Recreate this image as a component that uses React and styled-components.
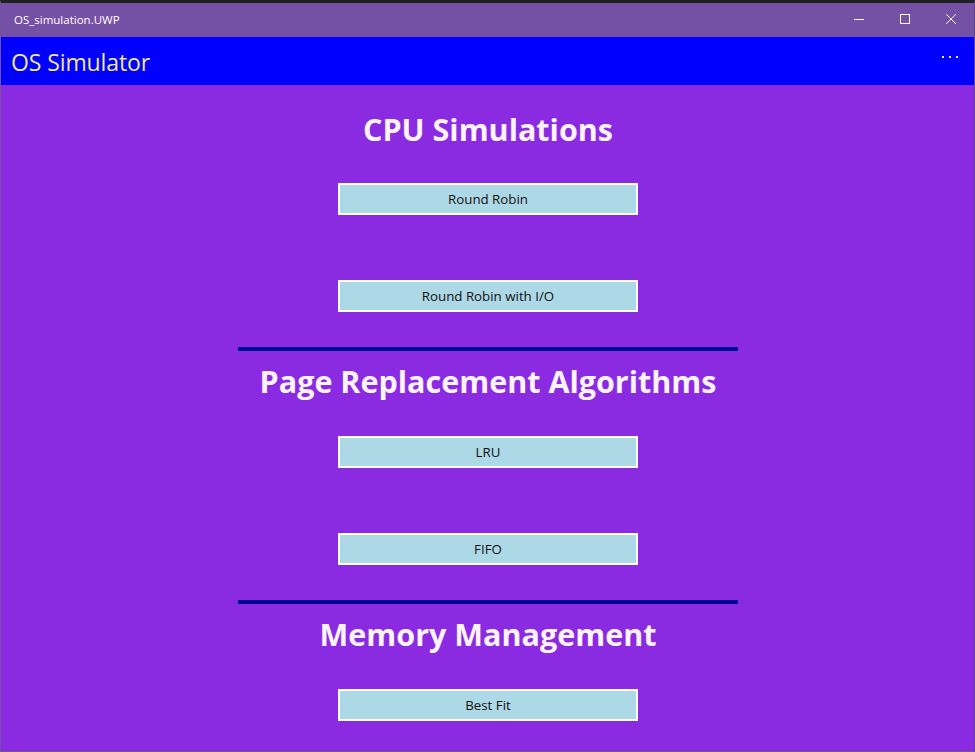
import React from "react";
import styled, { createGlobalStyle } from "styled-components";

const Global = createGlobalStyle`
  html, body { margin: 0; padding: 0; background: #1f1f1f; }
  body { font-family: "Open Sans", "Noto Sans", "Liberation Sans", sans-serif; }
  * { box-sizing: border-box; }
`;

const Window = styled.div`
  width: 975px;
  height: 752px;
  display: flex;
  flex-direction: column;
  border-top: 3px solid #1f1f1f;
  border-left: 1px solid #7550a5;
  border-right: 1px solid #5d4488;
  border-bottom: 1px solid #6a5a80;
  overflow: hidden;
`;

const TitleBar = styled.div`
  height: 34px;
  flex: none;
  background: #7551a5;
  display: flex;
  align-items: center;
  justify-content: space-between;
  color: #fff;
`;

const TitleText = styled.span`
  font-family: "Open Sans", "Noto Sans", sans-serif;
  font-size: 11.5px;
  padding-left: 13px;
  padding-bottom: 2px;
`;

const Controls = styled.div`
  display: flex;
  height: 100%;
`;

const CtrlButton = styled.div`
  width: 46px;
  height: 100%;
  display: flex;
  align-items: center;
  justify-content: center;
  padding-bottom: 2px;
`;

const AppHeader = styled.div`
  height: 48px;
  flex: none;
  background: #0000ff;
  display: flex;
  align-items: center;
  justify-content: space-between;
  padding: 2px 10px 0 10px;
`;

const AppTitle = styled.span`
  color: #efe68a;
  font-family: "Open Sans", "Noto Sans", sans-serif;
  font-weight: 400;
  font-size: 23px;
  letter-spacing: -0.1px;
`;

const MoreButton = styled.div`
  display: flex;
  gap: 5px;
  padding-right: 6px;
  margin-bottom: 10px;
`;

const Dot = styled.span`
  width: 2px;
  height: 2px;
  background: #e6e6ff;
`;

const Content = styled.div`
  flex: 1;
  background: #8a2be2;
  display: flex;
  flex-direction: column;
  align-items: center;
  padding-top: 25px;
  padding-left: 1px;
`;

const Heading = styled.h1`
  margin: 0;
  height: 40px;
  line-height: 38px;
  color: #fbf3ff;
  font-family: "Open Sans", "Noto Sans", sans-serif;
  font-weight: 700;
  font-size: 30.5px;
  letter-spacing: 0;
  text-align: center;
  white-space: nowrap;
`;

const ButtonGroup = styled.div`
  display: flex;
  flex-direction: column;
  gap: 65px;
  margin-top: ${(p) => p.$top}px;
`;

const SimButton = styled.button`
  width: 300px;
  height: 32px;
  background: #add8e6;
  border: 2px solid #ffffff;
  border-radius: 0;
  color: #111;
  font-family: "Open Sans", "Noto Sans", sans-serif;
  font-size: 13.3px;
  padding: 0;
  cursor: pointer;
`;

const Divider = styled.div`
  width: 500px;
  height: 4px;
  background: #000096;
  margin-top: 35px;
  margin-bottom: 11px;
`;

const sections = [
  { title: "CPU Simulations", items: ["Round Robin", "Round Robin with I/O"] },
  { title: "Page Replacement Algorithms", items: ["LRU", "FIFO"] },
  { title: "Memory Management", items: ["Best Fit"] },
];

export default function App() {
  return (
    <>
      <Global />
      <Window>
        <TitleBar>
          <TitleText>OS_simulation.UWP</TitleText>
          <Controls>
            <CtrlButton>
              <svg width="10" height="10" viewBox="0 0 10 10">
                <path d="M0 5.5 H10" stroke="#fff" strokeWidth="1" />
              </svg>
            </CtrlButton>
            <CtrlButton>
              <svg width="10" height="10" viewBox="0 0 10 10">
                <rect x="0.5" y="0.5" width="9" height="9" fill="none" stroke="#fff" strokeWidth="1" />
              </svg>
            </CtrlButton>
            <CtrlButton>
              <svg width="10" height="10" viewBox="0 0 10 10">
                <path d="M0 0 L10 10 M10 0 L0 10" stroke="#fff" strokeWidth="1" />
              </svg>
            </CtrlButton>
          </Controls>
        </TitleBar>
        <AppHeader>
          <AppTitle>OS Simulator</AppTitle>
          <MoreButton>
            <Dot />
            <Dot />
            <Dot />
          </MoreButton>
        </AppHeader>
        <Content>
          {sections.map((s, i) => (
            <React.Fragment key={s.title}>
              {i > 0 && <Divider />}
              <Heading>{s.title}</Heading>
              <ButtonGroup $top={i === 0 ? 33 : 34}>
                {s.items.map((it) => (
                  <SimButton key={it}>{it}</SimButton>
                ))}
              </ButtonGroup>
            </React.Fragment>
          ))}
        </Content>
      </Window>
    </>
  );
}
